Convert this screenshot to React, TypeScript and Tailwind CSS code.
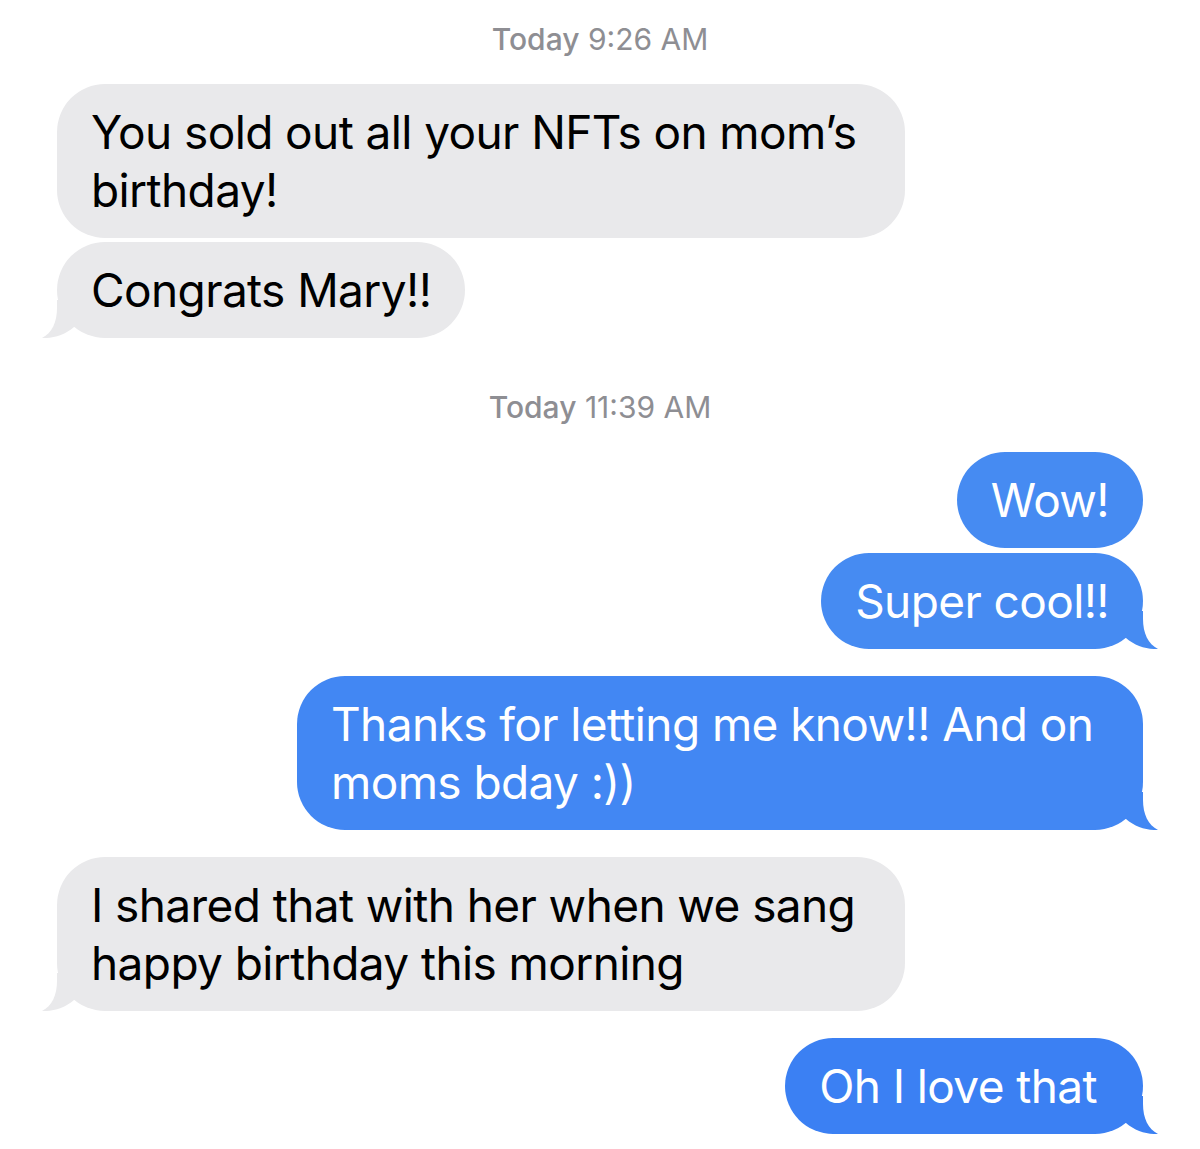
import React from "react";

type Msg = { text: React.ReactNode; tail?: boolean; wide?: boolean; color?: string; extraRight?: boolean };

function TailRight({ color }: { color: string }) {
  return (
    <svg
      className="absolute right-[-16px] bottom-0"
      width="42"
      height="38"
      viewBox="0 0 42 38"
      style={{ fill: color }}
    >
      <path d="M0 0 H26 V8 C26 22 31 33 41 38 C30 38.5 18 35 9 27 L0 27 Z" />
    </svg>
  );
}

function TailLeft({ color }: { color: string }) {
  return (
    <svg
      className="absolute left-[-16px] bottom-0"
      width="42"
      height="38"
      viewBox="0 0 42 38"
      style={{ fill: color }}
    >
      <path d="M42 0 H16 V8 C16 22 11 33 1 38 C12 38.5 24 35 33 27 L42 27 Z" />
    </svg>
  );
}

function Received({ text, tail, wide }: Msg) {
  return (
    <div className="flex justify-start">
      <div
        className={`relative whitespace-nowrap rounded-[48px] bg-[#e9e9eb] pl-[34px] pr-[34px] py-[19px] text-[46px] leading-[58px] tracking-[-0.6px] text-black ${
          wide ? "w-[848px]" : ""
        }`}
      >
        {tail && <TailLeft color="#e9e9eb" />}
        <span className="relative">{text}</span>
      </div>
    </div>
  );
}

function Sent({ text, tail, wide, color = "#468bf2", extraRight }: Msg) {
  return (
    <div className="flex justify-end">
      <div
        className={`relative whitespace-nowrap rounded-[48px] pl-[34px] py-[19px] text-[46px] leading-[58px] tracking-[-0.6px] text-white ${
          wide ? "w-[846px]" : ""
        } ${extraRight ? "pr-[46px]" : "pr-[34px]"}`}
        style={{ backgroundColor: color }}
      >
        {tail && <TailRight color={color} />}
        <span className="relative">{text}</span>
      </div>
    </div>
  );
}

function Stamp({ day, time }: { day: string; time: string }) {
  return (
    <div className="text-center text-[30px] leading-[36px] text-[#8e8e93]">
      <span className="font-medium">{day}</span> <span>{time}</span>
    </div>
  );
}

export default function App() {
  return (
    <div
      className="min-h-[1149px] w-[1200px] bg-white px-[57px] pt-[21px]"
      style={{ fontFamily: "Inter, 'Noto Sans', sans-serif" }}
    >
      <Stamp day="Today" time="9:26 AM" />
      <div className="mt-[27px] flex flex-col gap-[4px]">
        <Received
          wide
          text={
            <>
              You sold out all your NFTs on mom’s
              <br />
              birthday!
            </>
          }
        />
        <Received tail text="Congrats Mary!!" />
      </div>
      <div className="mt-[51px]">
        <Stamp day="Today" time="11:39 AM" />
      </div>
      <div className="mt-[27px] flex flex-col gap-[5px]">
        <Sent text="Wow!" />
        <Sent tail text="Super cool!!" />
      </div>
      <div className="mt-[27px]">
        <Sent
          tail
          wide
          color="#4287f3"
          text={
            <>
              Thanks for letting me know!! And on
              <br />
              moms bday :))
            </>
          }
        />
      </div>
      <div className="mt-[27px]">
        <Received
          tail
          wide
          text={
            <>
              I shared that with her when we sang
              <br />
              happy birthday this morning
            </>
          }
        />
      </div>
      <div className="mt-[27px]">
        <Sent tail extraRight color="#3b80f3" text="Oh I love that" />
      </div>
    </div>
  );
}
